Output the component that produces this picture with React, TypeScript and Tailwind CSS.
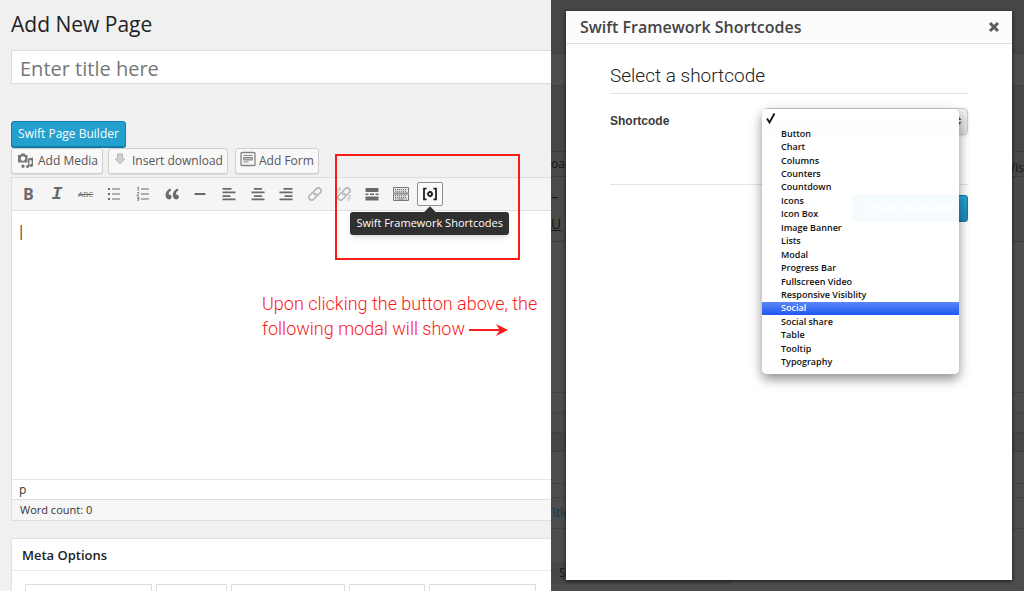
import React from "react";

const shortcodes = [
  "Button",
  "Chart",
  "Columns",
  "Counters",
  "Countdown",
  "Icons",
  "Icon Box",
  "Image Banner",
  "Lists",
  "Modal",
  "Progress Bar",
  "Fullscreen Video",
  "Responsive Visiblity",
  "Social",
  "Social share",
  "Table",
  "Tooltip",
  "Typography",
];

function Icon({ children, className = "" }: { children: React.ReactNode; className?: string }) {
  return (
    <svg viewBox="0 0 16 16" className={`size-4 ${className}`} fill="currentColor" aria-hidden="true">
      {children}
    </svg>
  );
}

function LinkShape() {
  return (
    <g transform="rotate(-45 8 8)" fill="none" stroke="currentColor" strokeWidth="1.6" strokeLinecap="round">
      <path d="M7 5.2H3.4a2.8 2.8 0 0 0 0 5.6H6a2.8 2.8 0 0 0 2.8-2.4" />
      <path d="M9 10.8h3.6a2.8 2.8 0 0 0 0-5.6H10a2.8 2.8 0 0 0-2.8 2.4" />
    </g>
  );
}

function ToolButton({ label, children, faded = false }: { label: string; children: React.ReactNode; faded?: boolean }) {
  return (
    <button
      type="button"
      aria-label={label}
      className={`flex size-6 items-center justify-center justify-self-center ${faded ? "text-[#b4b4b4]" : "text-[#6a6a6a]"}`}
    >
      {children}
    </button>
  );
}

function Toolbar() {
  return (
    <div role="toolbar" aria-label="Formatting" className="flex h-[33px] items-center border-b border-[#dedede] bg-[#f5f5f5] pl-[2px]">
      <div className="grid w-[430px] grid-cols-15 items-center">
        <ToolButton label="Bold"><b className="text-base">B</b></ToolButton>
        <ToolButton label="Italic"><b className="font-['Liberation_Mono',monospace] text-lg italic">I</b></ToolButton>
        <ToolButton label="Strikethrough"><span className="text-[8px] line-through">ABC</span></ToolButton>
        <ToolButton label="Bulleted list">
          <Icon>
            <path d="M2 2h2v2H2zM2 7h2v2H2zM2 12h2v2H2z" />
            <path d="M6 2.5h8v1H6zM6 7.5h8v1H6zM6 12.5h8v1H6z" />
          </Icon>
        </ToolButton>
        <ToolButton label="Numbered list">
          <Icon>
            <path d="M6 2.5h8v1H6zM6 7.5h8v1H6zM6 12.5h8v1H6z" />
            <path d="M2 2l1.3-.8V5M2 6.5h1.8v1L2 9.4h2M2 11.2h1.8v1.4H2.6h1.2v1.6H2" fill="none" stroke="currentColor" strokeWidth=".8" />
          </Icon>
        </ToolButton>
        <ToolButton label="Blockquote">
          <svg viewBox="0 0 20 20" className="size-[18px]" fill="currentColor" aria-hidden="true">
            <path d="M9.49 13.22c0-.74-.2-1.38-.61-1.9-.62-.78-1.83-.88-2.53-.72-.29-1.65 1.11-3.75 2.92-4.65L7.88 4c-2.73 1.3-5.42 4.28-4.96 8.05C3.21 14.43 4.59 16 6.54 16c.85 0 1.56-.25 2.12-.75s.83-1.18.83-2.03zm8.05 0c0-.74-.2-1.38-.61-1.9-.63-.78-1.83-.88-2.53-.72-.29-1.65 1.11-3.75 2.92-4.65L15.93 4c-2.73 1.3-5.41 4.28-4.95 8.05.29 2.38 1.66 3.95 3.61 3.95.85 0 1.56-.25 2.12-.75s.83-1.18.83-2.03z" />
          </svg>
        </ToolButton>
        <ToolButton label="Horizontal line"><Icon><path d="M2.5 7h11v2h-11z" /></Icon></ToolButton>
        <ToolButton label="Align left">
          <Icon><path d="M1.5 2h9v1.7h-9zM1.5 5.6h13v1.7h-13zM1.5 9.2h8v1.7h-8zM1.5 12.6h13v1.7h-13z" /></Icon>
        </ToolButton>
        <ToolButton label="Align center">
          <Icon><path d="M4 2h8v1.7H4zM1.5 5.6h13v1.7h-13zM4 9.2h8v1.7H4zM1.5 12.6h13v1.7h-13z" /></Icon>
        </ToolButton>
        <ToolButton label="Align right">
          <Icon><path d="M5.5 2h9v1.7h-9zM1.5 5.6h13v1.7h-13zM6.5 9.2h8v1.7h-8zM1.5 12.6h13v1.7h-13z" /></Icon>
        </ToolButton>
        <ToolButton label="Insert link" faded><Icon><LinkShape /></Icon></ToolButton>
        <ToolButton label="Remove link" faded>
          <Icon>
            <LinkShape />
            <path d="M1 3l3 1.6M3 1l1.8 3M15 13l-3-1.6M13 15l-1.800-3M.8 6h2.400M15.200 10h-2.400" stroke="currentColor" strokeWidth="1" />
          </Icon>
        </ToolButton>
        <ToolButton label="Read more">
          <Icon>
            <path d="M1.5 2h13v4h-13zM1.5 10.5h13v4h-13zM1.5 7.5h3v1.4h-3zM6 7.5h4v1.4H6zM11.5 7.5h3v1.4h-3z" />
          </Icon>
        </ToolButton>
        <ToolButton label="Toolbar toggle">
          <Icon>
            <path d="M.5 1.500h15v5.500H.5zM.5 8h15v6.500H.5z" fill="#ececec" stroke="currentColor" strokeWidth=".9" />
            <path d="M2 3.500h12M2 5.300h12M2 9.700h12M2 11.300h12" stroke="currentColor" strokeWidth="1" strokeDasharray="1.200 .8" />
            <path d="M2 13h1.500M4.500 13h7M12.500 13H14" stroke="currentColor" strokeWidth="1" />
          </Icon>
        </ToolButton>
        <div className="relative flex justify-center">
          <button
            type="button"
            aria-label="Swift Framework Shortcodes"
            aria-describedby="shortcode-tip"
            className="flex h-6 w-[26px] items-center justify-center rounded-[2px] border border-[#8f8f8f] bg-[#fafafa] text-[#222]"
          >
            <svg viewBox="0 0 16 16" className="size-4 shrink-0" fill="none" stroke="currentColor" strokeWidth="1.8" aria-hidden="true">
              <path d="M4.600 2.600H2v10.800h2.600M11.400 2.600H14v10.800h-2.600" />
              <circle cx="8" cy="8" r="2" />
              <path d="M8 4.800v1M8 10.200v1M4.800 8h1M10.200 8h1" strokeWidth="1" />
            </svg>
          </button>
          <div className="absolute top-full flex flex-col items-center">
            <span className="mt-[2px] -mb-[4px] size-2 rotate-45 bg-[#303030]" />
            <span
              id="shortcode-tip"
              role="tooltip"
              className="flex h-[23px] items-center rounded-[3px] bg-[#303030] px-[6px] text-[11px] whitespace-nowrap text-white shadow-md"
            >
              Swift Framework Shortcodes
            </span>
          </div>
        </div>
      </div>
    </div>
  );
}

const mediaButton =
  "flex h-[26px] items-center whitespace-nowrap rounded-[3px] border border-[#cfcfcf] bg-[#f8f8f8] text-xs text-[#555] shadow-[0_1px_0_#dcdcdc]";

function EditorPage() {
  return (
    <main className="relative flex min-w-0 flex-col overflow-hidden bg-[#f0f0f0] pl-[11px] text-[#333]">
      <h1 className="shrink-0 pt-[9px] text-[21px] leading-[30px] text-[#222]">Add New Page</h1>
      <input
        aria-label="Page title"
        placeholder="Enter title here"
        className="mt-[11px] h-[34px] w-full shrink-0 border border-r-0 border-[#dcdcdc] bg-white px-2 pt-[2px] text-[20px] placeholder:text-[#777]"
      />
      <button
        type="button"
        className="mt-[37px] h-[26px] w-[115px] shrink-0 self-start rounded-[3px] border border-[#0f7fae] bg-[#24a0ce] text-xs whitespace-nowrap text-white shadow-[0_1px_0_#0f78a5]"
      >
        Swift Page Builder
      </button>
      <div className="mt-px flex shrink-0">
        <button type="button" className={`${mediaButton} w-[92px] gap-[3px] pl-[5px]`}>
          <svg viewBox="0 0 18 18" className="size-[18px] shrink-0" fill="#777" aria-hidden="true">
            <path fillRule="evenodd" d="M2 3h1.5l.8-1.5h3.4L8.500 3H10.500v7.500H1V3zM6 4.300a2.300 2.300 0 1 0 0 4.600 2.300 2.300 0 0 0 0-4.600z" />
            <path d="M11 6.500l5-1v8a1.700 1.500 0 1 1-1.400-1.500V8l-2.200.5v6a1.700 1.500 0 1 1-1.400-1.500zM6 12.500a1.700 1.700 0 1 1 0 3.400 1.700 1.700 0 0 1 0-3.400z" />
          </svg>
          Add Media
        </button>
        <button type="button" className={`${mediaButton} ml-[5px] w-[120px] gap-1 pl-[3px]`}>
          <svg viewBox="0 0 16 16" className="mb-1 size-4 shrink-0" fill="#d2d2d2" stroke="#aaa" strokeWidth=".8" aria-hidden="true">
            <path d="M5.500 3h5v5H13l-5 5-5-5h2.500z" />
          </svg>
          Insert download
        </button>
        <button type="button" className={`${mediaButton} ml-[7px] w-[84px] gap-[3px] pl-1`}>
          <svg viewBox="0 0 16 16" className="mb-1 size-4 shrink-0" fill="none" stroke="#858585" aria-hidden="true">
            <rect x="1" y="1.500" width="14" height="13" rx="1" strokeWidth="1.300" />
            <path d="M3.500 4.500h9M3.500 11h5" />
            <path d="M3.500 6.500h9v2.500h-9z" fill="#bbb" />
          </svg>
          Add Form
        </button>
      </div>

      <section aria-label="Editor" className="mt-[3px] shrink-0 border border-r-0 border-[#dedede] bg-white">
        <Toolbar />
        <textarea
          aria-label="Page content"
          defaultValue="|"
          className="block h-[268px] w-full resize-none px-[5px] pt-2 text-[15px] leading-[22px] text-[#333] outline-none"
        />
        <div className="h-5 border-t border-[#e5e5e5] px-[7px] text-xs leading-[19px]">p</div>
        <div className="h-[21px] border-t border-[#dedede] bg-[#f6f6f6] px-2 text-[11px] leading-[19px]">Word count: 0</div>
      </section>

      <section className="mt-[17px] shrink-0 border border-r-0 border-b-0 border-[#e2e2e2] bg-white">
        <h2 className="h-8 border-b border-[#ebebeb] px-[10px] text-[13px] leading-8 font-semibold text-[#222]">Meta Options</h2>
        <div className="mt-[13px] mr-[15px] ml-[13px] grid h-10 grid-cols-[128fr_71fr_114fr_77fr_107fr] gap-1">
          <div className="border border-[#dedede]" />
          <div className="border border-[#dedede]" />
          <div className="border border-[#dedede]" />
          <div className="border border-[#dedede]" />
          <div className="border border-[#dedede]" />
        </div>
      </section>

      <div className="pointer-events-none absolute top-[154px] left-[335px] h-[106px] w-[185px] border-2 border-[#fb1a1a]" />
      <p className="pointer-events-none absolute top-[291px] left-[262px] font-['Roboto',sans-serif] text-[18px] leading-[25px] font-light whitespace-nowrap text-[#fb1a1a]">
        Upon clicking the button above, the
        <br />
        following modal will show
        <svg viewBox="0 0 40 12" className="ml-1 inline h-3 w-10" fill="#fb1a1a" aria-hidden="true">
          <path d="M0 5h30L27 0l12 6-12 6 3-5H0z" />
        </svg>
      </p>
    </main>
  );
}

function DimmedPage() {
  return (
    <div aria-hidden="true" className="col-start-1 row-start-1 flex flex-col overflow-hidden bg-[#4d4d4d] text-xs text-[#161616] *:shrink-0">
      <div className="h-[53px] bg-[#464646]" />
      <div className="h-[33px] border-y border-[#414141] bg-[#4e4e4e]" />
      <div className="h-[65px] bg-[#464646]" />
      <div className="flex h-[26px] items-center justify-between border-y border-[#3c3c3c] bg-[#494949]">
        <span>oad</span>
        <span className="pt-2">Vis</span>
      </div>
      <div className="h-[65px] border-b border-[#3e3e3e] bg-[#4a4a4a] text-sm">
        <div className="pt-[10px] leading-5">–</div>
        <div className="pt-[7px] leading-5 underline">U</div>
      </div>
      <div className="h-[150px]" />
      <div className="h-5 border-t border-[#424242]" />
      <div className="h-5 border-t border-[#424242] bg-[#4b4b4b]" />
      <div className="h-5 border-y border-[#404040] bg-[#464646]" />
      <div className="h-[31px]" />
      <div className="h-[14px] border-t border-[#424242]" />
      <div className="h-[32px] border-y border-[#424242] leading-[30px] text-[#12384d]">
        <span className="-ml-[5px]">Title</span>
      </div>
      <div className="mt-[33px] h-[22px] w-[180px] rounded-[3px] bg-[#464646] pl-2 leading-[22px]">S</div>
    </div>
  );
}

function ShortcodeMenu() {
  return (
    <div className="absolute top-[1px] right-[9px] w-[197px] rounded-[5px] bg-white/96 pb-[5px] font-['Open_Sans',sans-serif] text-[9px] font-semibold text-[#111] shadow-[0_5px_12px_rgba(0,0,0,0.45)]">
      <div role="listbox" aria-label="Shortcodes">
        <div role="option" aria-selected="true" aria-label="None" className="flex h-[18px] items-center pl-1">
          <svg viewBox="0 0 10 12" className="h-3 w-[10px]" fill="none" stroke="#111" strokeWidth="1.800" aria-hidden="true">
            <path d="M1 6.500l2.500 4L8.500 1.500" />
          </svg>
        </div>
        <div className="grid h-[242px] auto-rows-fr">
          {shortcodes.map((name) => (
            <div
              key={name}
              role="option"
              aria-selected="false"
              className={`flex items-center pl-[19px] leading-3 ${
                name === "Social" ? "bg-linear-to-b from-[#5a86f8] to-[#1f56ee] text-white" : ""
              }`}
            >
              {name}
            </div>
          ))}
        </div>
      </div>
    </div>
  );
}

function ShortcodeDialog() {
  return (
    <div
      role="dialog"
      aria-labelledby="dialog-title"
      className="z-10 col-start-1 row-start-1 mt-[11px] mr-3 mb-[11px] ml-[15px] bg-white shadow-[0_1px_4px_rgba(0,0,0,0.7)]"
    >
      <header className="flex h-[33px] items-center justify-between border-b border-[#dfdfdf] bg-[#fcfcfc] pr-3 pl-[14px]">
        <h2 id="dialog-title" className="text-base font-semibold text-[#444]">Swift Framework Shortcodes</h2>
        <button type="button" aria-label="Close" className="text-[#5c5c5c]">
          <svg viewBox="0 0 12 12" className="size-3" stroke="currentColor" strokeWidth="3" aria-hidden="true">
            <path d="M2 2l8 8M10 2l-8 8" />
          </svg>
        </button>
      </header>
      <form className="px-11 pt-[18px]" onSubmit={(e) => e.preventDefault()}>
        <h3 className="h-8 border-b border-[#e3e3e3] font-['Roboto',sans-serif] text-[19px] leading-7 font-light text-[#222]">
          Select a shortcode
        </h3>
        <div className="relative mt-[14px] flex h-[77px] items-start justify-between border-b border-[#e3e3e3]">
          <label htmlFor="shortcode" className="font-['Liberation_Sans',sans-serif] text-xs leading-[27px] font-bold text-[#3a3a3a]">
            Shortcode
          </label>
          <span className="relative">
            <select
              id="shortcode"
              className="block h-[27px] w-[204px] appearance-none rounded-[4px] border border-[#c9c9c9] bg-linear-to-b from-[#f2f2f2] to-[#dedede] shadow-sm"
            >
              <option value="" />
              {shortcodes.map((name) => (
                <option key={name}>{name}</option>
              ))}
            </select>
            <svg viewBox="0 0 6 10" className="pointer-events-none absolute top-2 right-[6px] h-[10px] w-[6px]" fill="#555" aria-hidden="true">
              <path d="M3 1l2.500 3H.5zM3 9l2.500-3H.5z" />
            </svg>
            <div className="absolute top-0 right-0 z-10">
              <ShortcodeMenu />
            </div>
          </span>
        </div>
        <button
          type="submit"
          className="mt-[10px] ml-auto block h-[27px] w-[116px] rounded-[3px] border border-[#1379a6] bg-linear-to-b from-[#27a5d4] to-[#1b87b6] text-[11px] font-semibold text-white"
        >
          Insert shortcode
        </button>
      </form>
    </div>
  );
}

export default function App() {
  return (
    <div className="grid h-screen grid-cols-[551fr_473fr] grid-rows-1 overflow-hidden font-['Open_Sans',sans-serif]">
      <EditorPage />
      <div className="grid min-h-0 min-w-0 grid-cols-1 grid-rows-1 overflow-hidden">
        <DimmedPage />
        <ShortcodeDialog />
      </div>
    </div>
  );
}
